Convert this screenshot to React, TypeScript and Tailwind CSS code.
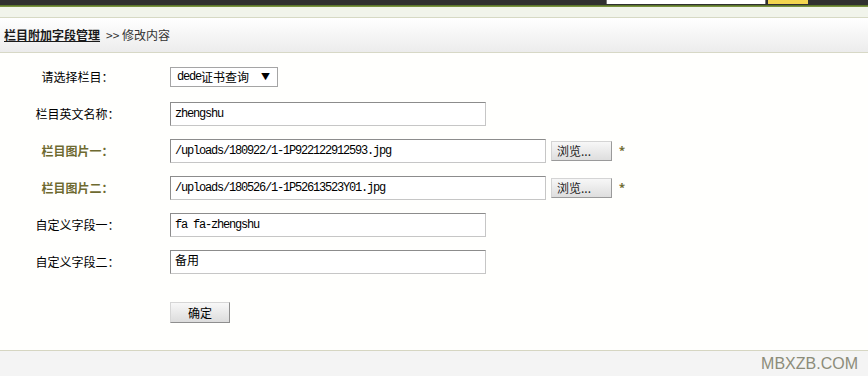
import React from 'react';

const cjk = 'font-[family-name:Noto_Sans_CJK_SC,sans-serif]';
const mono = 'font-[family-name:Liberation_Mono,Noto_Sans_CJK_SC,monospace]';

const inputCls = `h-[24px] bg-white border border-[#c6c6c6] border-t-[#8c8c8c] border-l-[#8c8c8c] px-[4px] flex items-center text-[12px] text-black ${mono}`;

const BrowseButton: React.FC = () => (
    <div className={`ml-[5px] w-[61px] h-[20px] flex items-center pl-[5px] text-[12px] text-[#222] bg-gradient-to-b from-[#f7f7f7] to-[#dedede] border border-[#d4d4d4] border-r-[#9a9a9a] border-b-[#9a9a9a] ${cjk}`}>
        浏览...
    </div>
);

interface RowProps {
    label: string;
    accent?: boolean;
    children: React.ReactNode;
}

const Row: React.FC<RowProps> = ({ label, accent, children }) => (
    <div className="h-[37px] flex items-center">
        <div className={`w-[155px] text-center text-[12px] ${cjk} ${accent ? 'text-[#6e6a30] font-bold' : 'text-black'}`}>
            {label}
        </div>
        <div className="ml-[15px] flex items-center">{children}</div>
    </div>
);

export default function App() {
    return (
        <div className="w-[868px] h-[376px] bg-white flex flex-col overflow-hidden">
            {/* top bar */}
            <div className="h-[5px] bg-[#303030] flex items-start">
                <div className="ml-[606px] w-[160px] h-[4px] bg-white border-x border-[#777]" />
                <div className="ml-[2px] w-[40px] h-[4px] bg-[#f3d54e]" />
            </div>
            <div className="h-[2px] bg-gradient-to-b from-[#4d6624] to-[#8aa34a]" />
            <div className="h-[11px] bg-[#f1f4eb] border-b border-[#d6d9c4]" />

            {/* breadcrumb */}
            <div className={`h-[35px] flex items-center pl-[4px] text-[12px] bg-gradient-to-b from-white to-[#ececec] border-b border-[#d7d8c6] ${cjk}`}>
                <span className="font-bold underline text-[#1a1a1a]">栏目附加字段管理</span>
                <span className="ml-[6px] text-[#333]">&gt;&gt; 修改内容</span>
            </div>

            {/* form */}
            <div className="flex-1 pt-[5px] bg-[#fffffd]">
                <Row label="请选择栏目：">
                    <div className={`w-[108px] h-[20px] bg-white border border-[#a5a5a5] flex items-center pl-[6px] text-[12px] text-black ${cjk}`}>
                        <span className={`${mono} tracking-[-1.2px]`}>dede</span>
                        <span>证书查询</span>
                        <span className="ml-[12px] text-[9px]">▼</span>
                    </div>
                </Row>
                <Row label="栏目英文名称：">
                    <div className={`w-[316px] ${inputCls} tracking-[-1.2px]`}>zhengshu</div>
                </Row>
                <Row label="栏目图片一：" accent>
                    <div className={`w-[376px] ${inputCls} tracking-[-1.2px]`}>/uploads/180922/1-1P922122912593.jpg</div>
                    <BrowseButton />
                    <span className="ml-[7px] text-[11px] font-bold text-[#6e6a30]">*</span>
                </Row>
                <Row label="栏目图片二：" accent>
                    <div className={`w-[376px] ${inputCls} tracking-[-1.2px]`}>/uploads/180526/1-1P52613523Y01.jpg</div>
                    <BrowseButton />
                    <span className="ml-[7px] text-[11px] font-bold text-[#6e6a30]">*</span>
                </Row>
                <Row label="自定义字段一：">
                    <div className={`w-[316px] ${inputCls} tracking-[-1.2px]`}>fa fa-zhengshu</div>
                </Row>
                <Row label="自定义字段二：">
                    <div className={`w-[316px] ${inputCls}`}>备用</div>
                </Row>
                <div className="mt-[22px] ml-[170px]">
                    <div className={`w-[60px] h-[21px] flex items-center justify-center text-[12px] text-black bg-gradient-to-b from-[#f8f8f8] to-[#dcdcdc] border border-[#d6d6d6] border-r-[#8e8e8e] border-b-[#8e8e8e] ${cjk}`}>
                        确定
                    </div>
                </div>
            </div>

            {/* footer */}
            <div className="h-[26px] bg-[#f4f4f4] border-t border-[#d6d6c2] flex items-center justify-end pr-[10px]">
                <span className="text-[16px] text-[#8c8c7a] font-[family-name:Liberation_Sans,sans-serif]">MBXZB.COM</span>
            </div>
        </div>
    );
}
